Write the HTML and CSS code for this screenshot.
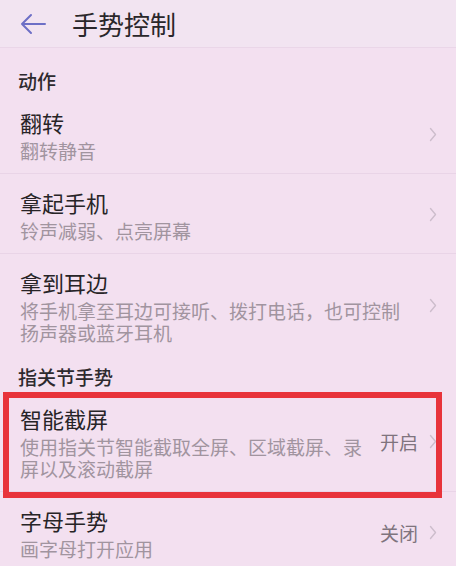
FILE: index.html
```html
<!DOCTYPE html>
<html lang="zh-CN">
<head>
<meta charset="utf-8">
<title>手势控制</title>
<link rel="stylesheet" href="styles.css">
</head>
<body>
<div class="screen">
  <header class="appbar">
    <svg class="back" width="28" height="24" viewBox="0 0 28 24">
      <path d="M3 12 H26 M3 12 L12 3 M3 12 L12 21" fill="none" stroke="#6d6fc6" stroke-width="2" stroke-linecap="round" stroke-linejoin="round"/>
    </svg>
    <h1 class="appbar-title">手势控制</h1>
  </header>
  <main class="content">
    <div class="section">动作</div>
    <div class="row">
      <div class="row-body">
        <div class="row-title">翻转</div>
        <div class="row-sub">翻转静音</div>
      </div>
      <svg class="chev" width="8" height="15" viewBox="0 0 8 15"><path d="M1.5 1.5 L6.5 7.5 L1.5 13.5" fill="none" stroke="#cdbdcc" stroke-width="1.4" stroke-linecap="round" stroke-linejoin="round"/></svg>
    </div>
    <div class="row">
      <div class="row-body">
        <div class="row-title">拿起手机</div>
        <div class="row-sub">铃声减弱、点亮屏幕</div>
      </div>
      <svg class="chev" width="8" height="15" viewBox="0 0 8 15"><path d="M1.5 1.5 L6.5 7.5 L1.5 13.5" fill="none" stroke="#cdbdcc" stroke-width="1.4" stroke-linecap="round" stroke-linejoin="round"/></svg>
    </div>
    <div class="row row-last">
      <div class="row-body">
        <div class="row-title">拿到耳边</div>
        <div class="row-sub">将手机拿至耳边可接听、拨打电话，也可控制扬声器或蓝牙耳机</div>
      </div>
      <svg class="chev" width="8" height="15" viewBox="0 0 8 15"><path d="M1.5 1.5 L6.5 7.5 L1.5 13.5" fill="none" stroke="#cdbdcc" stroke-width="1.4" stroke-linecap="round" stroke-linejoin="round"/></svg>
    </div>
    <div class="section">指关节手势</div>
    <div class="row row-marked">
      <div class="row-body">
        <div class="row-title">智能截屏</div>
        <div class="row-sub">使用指关节智能截取全屏、区域截屏、录屏以及滚动截屏</div>
      </div>
      <span class="row-value">开启</span>
      <svg class="chev" width="8" height="15" viewBox="0 0 8 15"><path d="M1.5 1.5 L6.5 7.5 L1.5 13.5" fill="none" stroke="#cdbdcc" stroke-width="1.4" stroke-linecap="round" stroke-linejoin="round"/></svg>
      <div class="highlight"></div>
    </div>
    <div class="row row-last">
      <div class="row-body">
        <div class="row-title">字母手势</div>
        <div class="row-sub">画字母打开应用</div>
      </div>
      <span class="row-value">关闭</span>
      <svg class="chev" width="8" height="15" viewBox="0 0 8 15"><path d="M1.5 1.5 L6.5 7.5 L1.5 13.5" fill="none" stroke="#cdbdcc" stroke-width="1.4" stroke-linecap="round" stroke-linejoin="round"/></svg>
    </div>
  </main>
</div>
</body>
</html>
```
FILE: styles.css
```css
html, body {
  margin: 0;
  padding: 0;
}
body {
  background: #f3e0f0;
  font-family: "Noto Sans CJK SC", "Noto Sans", sans-serif;
  color: #262326;
}
.screen {
  width: 456px;
  height: 566px;
  overflow: hidden;
  background: #f3e0f0;
}
.appbar {
  height: 48px;
  display: flex;
  align-items: center;
  padding-left: 19px;
  background: #f2e4f1;
  border-bottom: 1px solid #ead6e8;
  box-sizing: border-box;
}
.back {
  display: block;
  margin-top: 1px;
}
.appbar-title {
  margin: 0 0 0 25px;
  font-size: 26px;
  font-weight: 400;
  line-height: 34px;
  color: #2a272a;
}
.content {
  padding-top: 11px;
}
.section {
  padding: 9px 20px 0 18px;
  font-size: 19px;
  line-height: 26px;
  font-weight: 500;
  color: #2e2a2e;
}
.row {
  position: relative;
  display: flex;
  align-items: center;
  padding: 13px 19px 11px 20px;
  border-bottom: 1px solid #e9d4e7;
}
.row-last {
  border-bottom: none;
}
.row-body {
  flex: 1;
  min-width: 0;
  padding-right: 12px;
}
.row-title {
  font-size: 22px;
  line-height: 30px;
  color: #272427;
}
.row-sub {
  margin-top: 3px;
  font-size: 19px;
  line-height: 22px;
  color: #a1949f;
}
.row-value {
  margin-right: 11px;
  font-size: 19px;
  line-height: 24px;
  color: #7f747e;
}
.chev {
  display: block;
  flex: none;
}
.highlight {
  position: absolute;
  left: 3px;
  top: 2px;
  width: 439px;
  height: 106px;
  border: 6px solid #e8333b;
  box-sizing: border-box;
  pointer-events: none;
}
```
